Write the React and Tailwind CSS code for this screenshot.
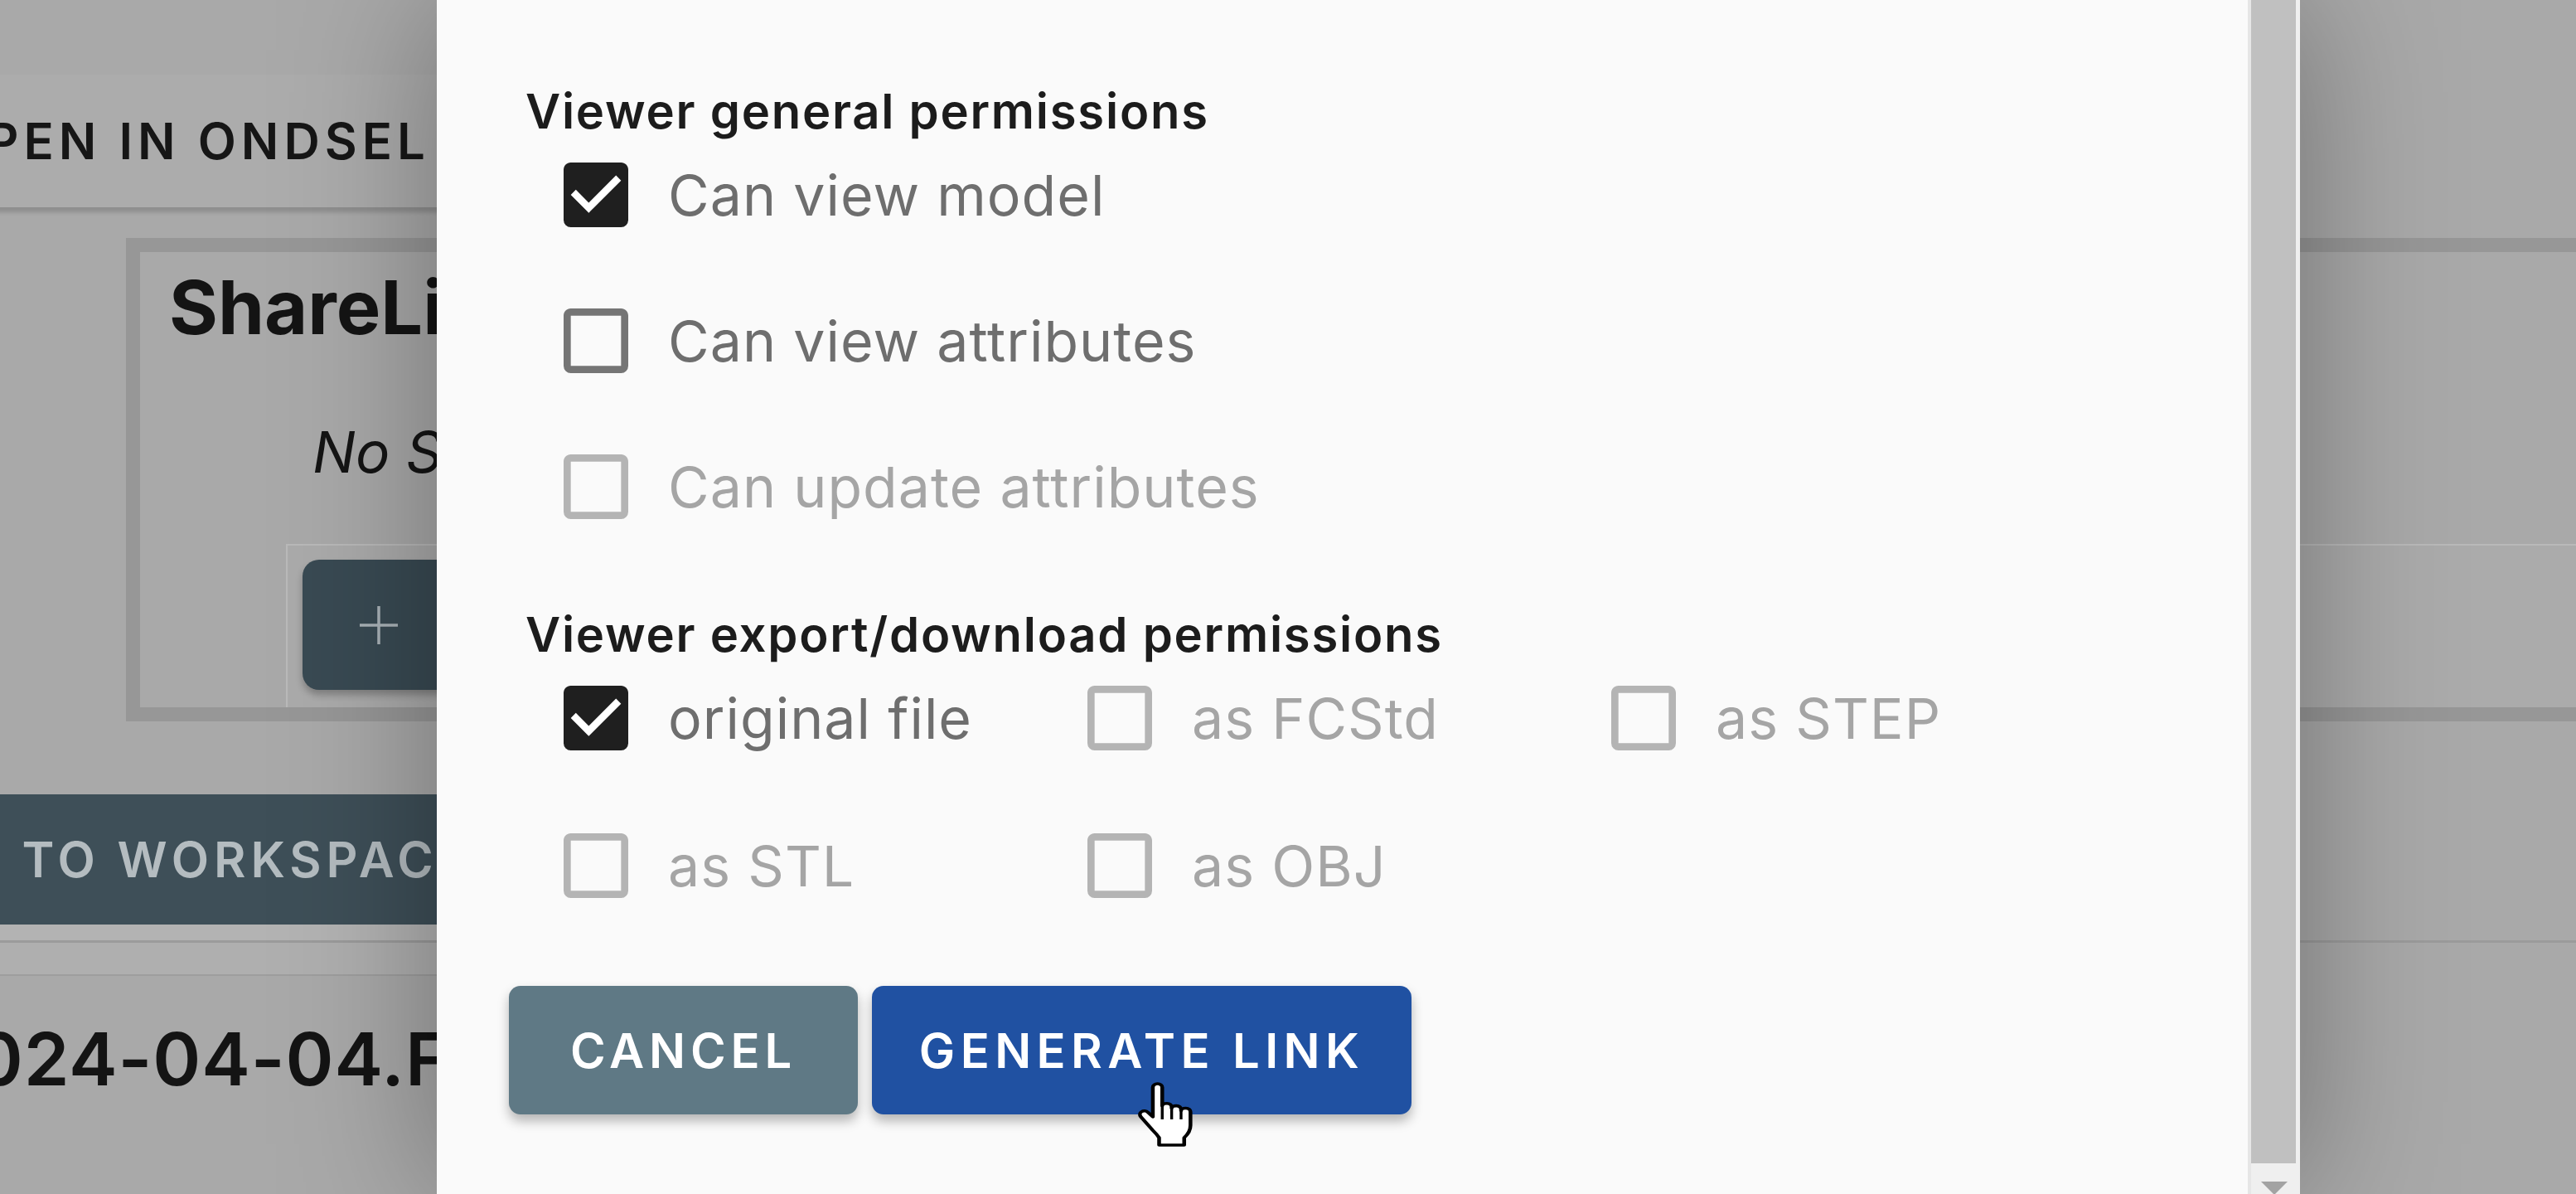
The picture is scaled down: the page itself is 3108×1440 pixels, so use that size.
import React from "react";

const font = { fontFamily: "Inter, 'Noto Sans', sans-serif" };

function Box({ state }) {
  // state: "on" | "off" | "disabled"
  if (state === "on") {
    return (
      <svg viewBox="0 0 24 24" className="w-[104px] h-[104px] shrink-0">
        <path
          fill="#1f1f1f"
          d="M19,3H5C3.89,3 3,3.89 3,5V19A2,2 0 0,0 5,21H19A2,2 0 0,0 21,19V5C21,3.89 20.1,3 19,3Z"
        />
        <path fill="#ffffff" d="M10,17L5,12L6.41,10.58L10,14.17L17.59,6.58L19,8Z" />
      </svg>
    );
  }
  const color = state === "off" ? "#757575" : "#b4b4b4";
  return (
    <svg viewBox="0 0 24 24" className="w-[104px] h-[104px] shrink-0">
      <path
        fill={color}
        d="M19,3H5C3.89,3 3,3.89 3,5V19A2,2 0 0,0 5,21H19A2,2 0 0,0 21,19V5C21,3.89 20.1,3 19,3M19,5V19H5V5H19Z"
      />
    </svg>
  );
}

function Option({ label, state }) {
  const text = state === "disabled" ? "text-[#a5a5a5]" : "text-[#6e6e6e]";
  return (
    <div className="flex items-center h-[104px]">
      <Box state={state} />
      <span className={`ml-[35px] text-[68px] tracking-[0.015em] leading-none whitespace-nowrap ${text}`}>
        {label}
      </span>
    </div>
  );
}

function HandCursor() {
  return (
    <svg
      viewBox="3 0 18.5 27"
      preserveAspectRatio="none"
      className="absolute left-[1372px] top-[1304px] w-[70px] h-[80px]"
    >
      <path
        d="M8 2.5C8 1.7 8.7 1 9.5 1C10.3 1 11 1.7 11 2.5V10C11 9.4 11.6 9 12.5 9C13.4 9 14 9.6 14 10.5V11C14 10.4 14.6 10 15.5 10C16.4 10 17 10.6 17 11.5V12C17 11.4 17.6 11 18.5 11C19.4 11 20 11.6 20 12.5V18C20 20 19.3 21.5 18 23V26H10V23C9.5 22 8.8 21 8 20L4.2 14.5C3.7 13.8 3.8 12.9 4.4 12.4C5 11.9 5.9 12 6.4 12.6L8 14.5Z"
        fill="#ffffff"
        stroke="#000000"
        strokeWidth="1.2"
        strokeLinejoin="round"
      />
      <path d="M11 10V15.5M14 11V15.5M17 12V15.5" stroke="#000000" strokeWidth="0.9" />
    </svg>
  );
}

export default function App() {
  return (
    <div style={font} className="relative w-[3108px] h-[1440px] overflow-hidden bg-[#a9a9a9]">
      {/* page behind the dialog */}
      <div className="absolute inset-0 flex flex-col">
        <div className="mt-[90px] h-[160px] w-[1100px] -ml-[200px] shrink-0 flex items-center justify-end pr-[381px] bg-[#acacac] shadow-[0_6px_5px_rgba(0,0,0,0.16)]">
          <span className="text-[60px] font-semibold tracking-[0.1em] leading-none text-[#161616] whitespace-nowrap">
            OPEN IN ONDSEL
          </span>
        </div>

        <div className="mt-[37px] ml-[152px] w-[3200px] h-[583px] shrink-0 border-[17px] border-[#979797] flex flex-col">
          <h2 className="mt-[22px] ml-[35px] text-[90px] font-bold leading-none text-[#141414] whitespace-nowrap">
            ShareLinks
          </h2>
          <p className="mt-[95px] ml-[208px] text-[69px] italic leading-none text-[#141414] whitespace-nowrap">
            No ShareLinks
          </p>
          <div className="mt-[76px] ml-[176px] flex-1 border-t-2 border-l-2 border-[#b9b9b9] bg-[#ababab]">
            <div className="mt-[17px] ml-[18px] w-[184px] h-[157px] rounded-[20px] bg-[#394a53] shadow-[0_6px_8px_rgba(0,0,0,0.25)] flex items-center justify-center">
              <svg viewBox="0 0 48 48" className="w-[48px] h-[48px]">
                <path d="M24 1V47M1 24H47" stroke="#aab3b8" strokeWidth="3.5" />
              </svg>
            </div>
          </div>
        </div>

        <div className="mt-[88px] h-[157px] w-[1400px] -ml-[300px] shrink-0 flex items-center bg-[#3e4f58] pl-[160px]">
          <span className="text-[59px] font-semibold tracking-[0.1em] leading-none text-[#b4bcc0] whitespace-nowrap">
            ADD TO WORKSPACE
          </span>
        </div>
        <div className="h-[19px] w-[1100px] shrink-0 bg-[#b3b3b3]" />
        <div className="h-[3px] shrink-0 bg-[#9b9b9b]" />
        <div className="h-[40px] w-[1100px] shrink-0 bg-[#afafaf] border-b-2 border-[#9e9e9e]" />
        <div className="mt-[56px] -ml-[86px] text-[88px] font-semibold tracking-[0.01em] leading-none text-[#141414] whitespace-nowrap">
          2024-04-04.FCStd
        </div>
      </div>

      {/* dialog */}
      <div className="absolute left-[527px] top-0 bottom-0 w-[2248px] flex bg-[#fafafa] shadow-[0_0_170px_rgba(0,0,0,0.34)]">
        <div className="flex-1 flex flex-col pl-[107px] pt-[105px]">
          <h3 className="text-[58px] font-semibold tracking-[0.03em] leading-none text-[#1c1c1c] whitespace-nowrap">
            Viewer general permissions
          </h3>
          <div className="mt-[20px] pl-[33px] flex flex-col gap-[72px]">
            <Option label="Can view model" state="on" />
            <Option label="Can view attributes" state="off" />
            <Option label="Can update attributes" state="disabled" />
          </div>

          <h3 className="mt-[97px] text-[58px] font-semibold tracking-[0.03em] leading-none text-[#1c1c1c] whitespace-nowrap">
            Viewer export/download permissions
          </h3>
          <div className="mt-[20px] pl-[33px] grid grid-cols-[632px_632px_632px] gap-y-[74px]">
            <Option label="original file" state="on" />
            <Option label="as FCStd" state="disabled" />
            <Option label="as STEP" state="disabled" />
            <Option label="as STL" state="disabled" />
            <Option label="as OBJ" state="disabled" />
          </div>

          <div className="mt-[93px] -ml-[20px] flex gap-[17px]">
            <button className="w-[421px] h-[155px] rounded-[14px] bg-[#5f7985] shadow-[0_8px_14px_rgba(0,0,0,0.28)] text-[58px] font-semibold tracking-[0.1em] leading-none text-white">
              CANCEL
            </button>
            <button className="w-[651px] h-[155px] rounded-[14px] bg-[#2051a2] shadow-[0_8px_14px_rgba(0,0,0,0.28)] text-[58px] font-semibold tracking-[0.11em] leading-none text-white">
              GENERATE LINK
            </button>
          </div>
        </div>

        {/* scrollbar */}
        <div className="w-[63px] flex flex-col bg-[#efefef] border-l-4 border-[#e6e6e6]">
          <div className="flex-1 mr-[5px] bg-[#c0c0c0]" />
          <div className="h-[37px] flex justify-center pt-[22px] pr-[4px]">
            <svg viewBox="0 0 32 16" className="w-[32px] h-[16px]">
              <path d="M0 0H32L16 16Z" fill="#a3a3a3" />
            </svg>
          </div>
        </div>
      </div>

      <HandCursor />
    </div>
  );
}
